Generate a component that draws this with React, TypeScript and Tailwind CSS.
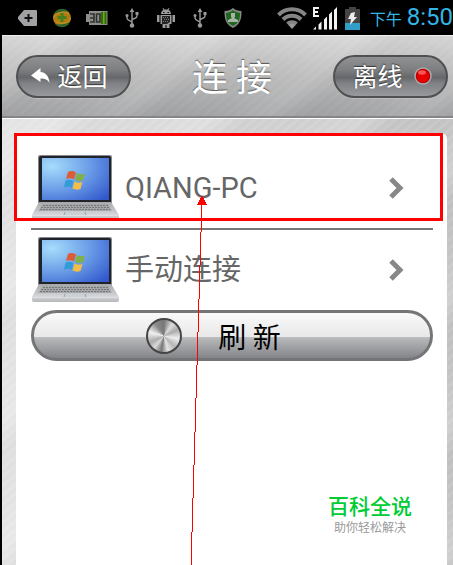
import type { ReactNode } from 'react'

const BRUSHED = 'bg-[repeating-linear-gradient(140deg,rgba(255,255,255,0)_0px,rgba(255,255,255,0.04)_2px,rgba(0,0,0,0.01)_4px,rgba(255,255,255,0)_7px),repeating-linear-gradient(140deg,rgba(255,255,255,0)_0px,rgba(255,255,255,0.12)_37px,rgba(0,0,0,0.02)_61px,rgba(255,255,255,0)_97px),linear-gradient(to_bottom,#d6d6d6,#b9b9ba_50%,#a3a4a6)]'
const PAPER = 'bg-[repeating-linear-gradient(140deg,rgba(255,255,255,0)_0px,rgba(255,255,255,0.1)_2px,rgba(0,0,0,0.01)_4px,rgba(255,255,255,0)_7px),repeating-linear-gradient(140deg,rgba(255,255,255,0)_0px,rgba(255,255,255,0.2)_37px,rgba(0,0,0,0.02)_61px,rgba(255,255,255,0)_97px),linear-gradient(to_right,#e4e4e4,#dadada_40%,#c4c4c4)]'

const DEVICES = [
  { id: 'pc', name: 'QIANG-PC', marked: true },
  { id: 'manual', name: '手动连接', marked: false },
]

function UsbIcon() {
  return (
    <svg className="h-5 w-4" viewBox="0 0 16 20" fill="none" stroke="#9a9a9a" strokeWidth="1.4">
      <path d="M8 3v14M8 14.5C7 12 3 13 3 10V8M8 12c1-2 5-1 5-4V6" />
      <path d="m8 0 2.4 4H5.6z" fill="#9a9a9a" stroke="none" />
      <circle cx="8" cy="17.5" r="2.2" fill="#9a9a9a" stroke="none" />
      <circle cx="3" cy="7.5" r="1.5" fill="#9a9a9a" stroke="none" />
      <path d="M11.5 4h3v3h-3z" fill="#9a9a9a" stroke="none" />
    </svg>
  )
}

function StatusBar() {
  return (
    <div className="flex h-[35px] items-center justify-between bg-black pl-[18px]">
      <div className="flex items-center">
        <svg className="h-4 w-5" viewBox="0 0 20 16">
          <path d="M6 0h12q1 0 1 1v14q0 1-1 1H6L0 9V7z" fill="#a2a1a4" />
          <path d="M10.5 4v8M6.5 8h8" stroke="#111" strokeWidth="2" />
        </svg>
        <svg className="ml-[14px] h-5 w-5" viewBox="0 0 20 20">
          <circle cx="10" cy="10" r="9" fill="#b07c12" />
          <path d="M2 6a9 9 0 0 1 15-2c-6-1-11 0-15 2M18 14a9 9 0 0 1-15 2c6 1 11 0 15-2" fill="#2b6330" />
          <path d="M10 5v9M5.5 9.5h9" stroke="#47801d" strokeWidth="3" />
          <path d="M1.5 10C3 5 12 2 17 6M18.5 10c-2 6-10 7-15 3" stroke="#c39820" fill="none" />
        </svg>
        <svg className="ml-[14px] h-4 w-[22px]" viewBox="0 0 22 16">
          <path d="M3 1h18.5v14H3v-3H0V4h3z" fill="#8b8e89" />
          <path d="M15 2h5.5v12H15z" fill="#356b0b" />
          <path d="M17 2h1.5v12H17z" fill="#69ab1b" />
          <path d="M4 4h4v8H4m0-4h4M10.5 4H14v8h-3.5z" fill="none" stroke="#303030" strokeWidth="1.6" />
        </svg>
        <span className="ml-4"><UsbIcon /></span>
        <svg className="ml-4 h-5 w-5" viewBox="0 0 20 20" fill="#9b9b9b">
          <path d="M5 6c0-2 1-3.500 2.500-4L6.500.5l.7-.5L8.500 1.500h3L12.800 0l.7.5-1 1.500C14 2.500 15 4 15 6zM4.500 7h11v9h-2v4h-3v-3h-1v3h-3v-4h-2zM1 7h2.500v7H1zM16.500 7H19v7h-2.500z" />
          <path d="M7 4h1.500v1H7zm4.500 0H13v1h-1.500z" fill="#111" />
          <path d="M6 8h8v6l-3 2H6z" fill="#242424" />
          <path d="M7 9h1v1H7zm2 0h1v1H9zm2 0h1v1h-1zM8 11h1v1H8zm2 0h1v1h-1zm2 0h1v1h-1zM7 13h1v1H7zm2 0h1v1H9zm2 0h1v1h-1z" fill="#777" />
        </svg>
        <span className="ml-4"><UsbIcon /></span>
        <svg className="ml-4 h-5 w-[18px]" viewBox="0 0 18 20">
          <path d="M9 0c2 2 5 3 8.500 3 0 8-1 13-8.500 17C1.500 16 .5 11 .5 3 4 3 7 2 9 0" fill="#858a85" />
          <path d="M9 2c2 2 4 2.500 7 3 0 6-1 10-7 13-6-3-7-7-7-13 3-.5 5-1 7-3" fill="#20661f" />
          <path d="M7 5h4v4l-1 1 4 2v2H4v-2l4-2-1-1z" fill="#a7b5a7" />
        </svg>
      </div>
      <div className="flex items-center">
        <svg className="h-[22px] w-[30px]" viewBox="0 0 30 22" fill="none" stroke="#858585" strokeWidth="4">
          <path d="M1.500 8a19 19 0 0 1 27 0M6 12.500a12.500 12.500 0 0 1 18 0M10.500 17a6.500 6.500 0 0 1 9 0" />
          <path d="m11.500 18 3.500 4 3.500-4q-3.500-2.500-7 0" fill="#999" stroke="none" />
        </svg>
        <svg className="ml-[5px] h-6 w-[26px]" viewBox="0 0 26 24" fill="#f2f2f2">
          <path d="M7 2H2v8h5M2 6h4" fill="none" stroke="#f2f2f2" strokeWidth="2" />
          <path d="M1 23.500 4 20.500v3zM6.500 18.500l3-3v8h-3zM12 13.500l3-3v13h-3zM17 8.500l3-3v18h-3zM22 4l3-3v22.500h-3z" />
        </svg>
        <svg className="ml-[7px] h-6 w-[15px]" viewBox="0 0 15 24">
          <path d="M4 1h7v2h4v21H0V3h4z" fill="#444" />
          <path d="M0 17h15v7H0z" fill="#319fc8" />
          <path d="m6 7 4-1-1 5h3l-7 8 1-6H3z" fill="#eee" />
        </svg>
        <span className="ml-[10px] flex items-center text-[#33b5e5]">
          <span className="font-['Noto_Sans_CJK_SC',sans-serif] text-[16px] leading-6">下午</span>
          <span className="mb-0.5 ml-[5px] font-[Roboto,sans-serif] text-[24px] leading-6">8:50</span>
        </span>
      </div>
    </div>
  )
}

function PillButton({ children }: { children: ReactNode }) {
  return (
    <button type="button" className="flex h-[43px] w-[115px] items-center justify-center rounded-full border-2 border-[#505052] bg-[linear-gradient(to_bottom,#939496,#7d7e80_35%,#66676a_52%,#7f8083_65%,#9c9da0)] bg-origin-border text-[25px] leading-8 text-white shadow-[0_1px_0_#bcbcbc] [text-shadow:0_-1px_1px_#333]">
      {children}
    </button>
  )
}

function Header() {
  return (
    <header className={`flex h-[83px] items-center justify-between border-t border-b-2 border-t-[#eeeeee] border-b-[#858587] pr-[5px] pl-[14px] ${BRUSHED}`}>
      <PillButton>
        <svg className="mr-[7px] h-4 w-[19px]" viewBox="0 0 19 16">
          <path d="M0 7.500 9.500 0v4C15 4.500 18 8.500 18.500 15c-2-3.500-4.500-4.500-9-4.500V14z" fill="#fff" />
        </svg>
        <span className="mr-2 mb-0.5">返回</span>
      </PillButton>
      <h1 className="mb-0.5 text-[36px] leading-[44px] text-white [text-shadow:0_-1px_1px_#555]">连 接</h1>
      <PillButton>
        <span className="mb-0.5 ml-1">离线</span>
        <svg className="ml-3 h-[18px] w-[18px]" viewBox="0 0 18 18">
          <circle cx="9" cy="9" r="8" fill="#b80000" stroke="#aaa" strokeWidth="1.5" />
          <circle cx="9" cy="9.5" r="6" fill="#e60000" />
          <ellipse cx="8" cy="5.5" rx="4" ry="2.2" fill="#ff5450" />
        </svg>
      </PillButton>
    </header>
  )
}

function LaptopIcon() {
  return (
    <svg className="h-[65px] w-[88px] shrink-0" viewBox="0 0 88 65">
      <defs>
        <radialGradient id="screen" cx="0.15" cy="0.2" r="1.1">
          <stop offset="0" stopColor="#a6dcfb" />
          <stop offset="0.5" stopColor="#6c9fe8" />
          <stop offset="1" stopColor="#3157cc" />
        </radialGradient>
        <linearGradient id="base" x1="0" y1="0" x2="0" y2="1">
          <stop offset="0" stopColor="#a5a7aa" />
          <stop offset="0.7" stopColor="#d4d6d9" />
          <stop offset="1" stopColor="#b4b6b9" />
        </linearGradient>
      </defs>
      <path d="M9 0h70q2 0 2 2v46H7V2q0-2 2-2" fill="#85888e" />
      <path d="M10 1h68q2 0 2 2v44H8V3q0-2 2-2" fill="#20232a" />
      <path d="M11 3h67v42H11z" fill="url(#screen)" />
      <path d="M8 47h72l8 13v3q0 2-2 2H3q-2 0-2-2v-3z" fill="url(#base)" />
      <path d="M12 49h65l4 7H7z" fill="#a5a7a9" />
      <path d="M12 50.5h65M10 52.5h69M9 54.5h70" stroke="#74767a" strokeDasharray="2 1" />
      <path d="M1 60.500h87" stroke="#dddee0" />
      <path d="M34 57h20l1 3H33z" fill="#cdd0d3" />
      <path d="m34 57-1 3m21-3 1 3" stroke="#7fa9c8" />
      <path d="M37 17c3-1.500 5-1 8 .5l-2 7c-3-1.500-5-1.500-8-.5z" fill="#dc5d35" />
      <path d="M46 18c3 1.500 5 1.500 8 .5l-2 7c-3 1-5 1-8-.5z" fill="#80b04c" />
      <path d="M34.500 25.500c3-1 5-1 8 .5l-2 7c-2-1.500-5-1.500-7.500-.5z" fill="#329bd9" />
      <path d="M43.500 26.500c3 1.500 5 1.500 8 .5l-2 7c-3 1-5 1-8-.5z" fill="#f3bd47" />
    </svg>
  )
}

function DeviceRow({ name, marked }: { name: string; marked: boolean }) {
  return (
    <li className={marked ? 'relative border-b-2 border-[#777777] pt-[22px] pb-2' : 'pt-[7px] pb-2'}>
      <button type="button" className="flex w-full items-center text-left text-[#666666]">
        <LaptopIcon />
        <span className="ml-1.5 flex-1 font-[Roboto,'Noto_Sans_CJK_SC',sans-serif] text-[29px] leading-9">{name}</span>
        <svg className="mr-7 h-6 w-[17px]" viewBox="0 0 17 24" fill="none" stroke="#888888" strokeWidth="5">
          <path d="m3 3 9 9-9 9" />
        </svg>
      </button>
      {/* highlight frame over the chosen computer */}
      {marked && <div className="pointer-events-none absolute top-0 -right-[10px] -left-[17px] h-[88px] border-3 border-[#ff0000]" />}
    </li>
  )
}

function Pointer() {
  return (
    <svg className="pointer-events-none absolute inset-0 h-full w-full" aria-hidden="true" shapeRendering="crispEdges">
      <line x1="186" y1="66" x2="175" y2="100%" stroke="#ff0000" />
      <path d="m186 62 5 10h-10z" fill="#ff0000" />
    </svg>
  )
}

export default function App() {
  return (
    <div className="flex min-h-screen flex-col font-['Noto_Sans_CJK_SC',sans-serif]">
      <StatusBar />
      <div className="flex flex-1 flex-col border-l-2 border-black">
        <Header />
        <main className={`flex flex-1 flex-col border-t border-white pt-[14px] pr-[6px] pl-[14px] ${PAPER}`}>
          <section className="relative flex flex-1 flex-col rounded-t-md bg-white pr-[14px] pl-[15px]">
            <ul>
              {DEVICES.map(d => <DeviceRow key={d.id} name={d.name} marked={d.marked} />)}
            </ul>
            <button type="button" className="flex h-[51px] w-full items-center justify-center rounded-full border-3 border-[#747577] bg-[linear-gradient(to_bottom,#fbfbfb,#e8e8e8_53%,#b9babc_54%,#7c7d81)] bg-origin-border pr-[37px] text-[28px] leading-8 text-black">
              <span className="mr-9 h-9 w-9 rounded-full border-2 border-[#444444] bg-[conic-gradient(#777777,#dddddd_35deg,#aaaaaa_65deg,#eeeeee_100deg,#b5b5b5_135deg,#e5e5e5_165deg,#777777_190deg,#d9d9d9_220deg,#aaaaaa_245deg,#f0f0f0_285deg,#888888_325deg,#777777)]" />
              刷 新
            </button>
            <footer className="mt-auto mr-[21px] mb-[30px] flex flex-col items-center self-end">
              <p className="text-[21px] leading-7 font-medium text-[#00cc33]">百科全说</p>
              <p className="text-[12px] leading-4 text-[#999999]">助你轻松解决</p>
            </footer>
            <Pointer />
          </section>
        </main>
      </div>
    </div>
  )
}
